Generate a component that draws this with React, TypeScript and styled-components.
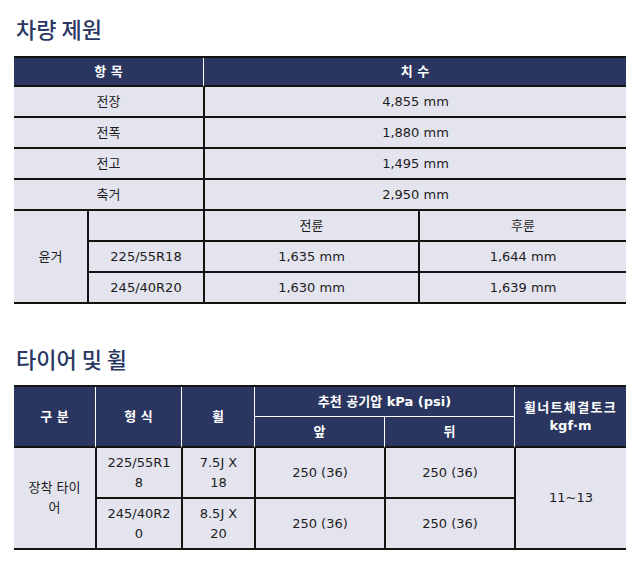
import React from "react";
import styled, { createGlobalStyle } from "styled-components";

const Global = createGlobalStyle`
  html, body { margin: 0; padding: 0; background: #ffffff; }
  body { font-family: "DejaVu Sans", "Noto Sans CJK KR", sans-serif; color: #1c1c1c; }
`;

const NAVY = "#2a3660";
const BODY_BG = "#e4e4ef";
const LINE = "#15130f";

const Page = styled.div`
  padding: 13px 14px 0 14px;
  display: flex;
  flex-direction: column;
`;

const Title = styled.h2<{ $top?: number; $bottom?: number }>`
  margin: ${(p) => p.$top ?? 0}px 0 ${(p) => p.$bottom ?? 13}px 2px;
  font-family: "Noto Sans CJK KR", sans-serif;
  font-size: 22px;
  line-height: 30px;
  font-weight: 500;
  color: #2b3763;
`;

const Table = styled.table`
  width: 612px;
  table-layout: fixed;
  border-collapse: separate;
  border-spacing: 0;
  border-top: 2px solid ${LINE};
`;

const Head = styled.th<{
  $first?: boolean;
  $h: number;
  $bottom?: "dark" | "white";
}>`
  box-sizing: border-box;
  background: ${NAVY};
  color: #ffffff;
  font-family: "DejaVu Sans", "Noto Sans CJK KR", sans-serif;
  font-size: 13px;
  font-weight: 700;
  line-height: 18px;
  height: ${(p) => p.$h}px;
  padding: 0 4px;
  text-align: center;
  vertical-align: middle;
  border-left: ${(p) => (p.$first ? "none" : "1px solid #ffffff")};
  border-bottom: ${(p) =>
    p.$bottom === "white" ? "1px solid #ffffff" : `2px solid ${LINE}`};
`;

const Spread = styled.span`
  letter-spacing: 1.3px;
`;

const Cell = styled.td<{ $first?: boolean; $h: number; $wrap?: boolean }>`
  box-sizing: border-box;
  background: ${BODY_BG};
  font-size: 13px;
  line-height: 20px;
  height: ${(p) => p.$h}px;
  padding: 0 10px;
  text-align: center;
  vertical-align: middle;
  border-left: ${(p) => (p.$first ? "none" : `2px solid ${LINE}`)};
  border-bottom: 2px solid ${LINE};
  overflow-wrap: ${(p) => (p.$wrap ? "anywhere" : "normal")};
`;

const specs = [
  ["전장", "4,855 mm"],
  ["전폭", "1,880 mm"],
  ["전고", "1,495 mm"],
  ["축거", "2,950 mm"],
];

const tread = [
  ["225/55R18", "1,635 mm", "1,644 mm"],
  ["245/40R20", "1,630 mm", "1,639 mm"],
];

const tires = [
  ["225/55R18", "7.5J X 18"],
  ["245/40R20", "8.5J X 20"],
];

export default function App() {
  return (
    <>
      <Global />
      <Page>
        <Title>차량 제원</Title>
        <Table>
          <colgroup>
            <col style={{ width: 73 }} />
            <col style={{ width: 116 }} />
            <col style={{ width: 215 }} />
            <col style={{ width: 208 }} />
          </colgroup>
          <thead>
            <tr>
              <Head $first $h={29} colSpan={2}>항 목</Head>
              <Head $h={29} colSpan={2}>치 수</Head>
            </tr>
          </thead>
          <tbody>
            {specs.map(([k, v]) => (
              <tr key={k}>
                <Cell $first $h={31} colSpan={2}>{k}</Cell>
                <Cell $h={31} colSpan={2}>{v}</Cell>
              </tr>
            ))}
            <tr>
              <Cell $first $h={31} rowSpan={3}>윤거</Cell>
              <Cell $h={31}></Cell>
              <Cell $h={31}>전륜</Cell>
              <Cell $h={31}>후륜</Cell>
            </tr>
            {tread.map(([a, b, c]) => (
              <tr key={a}>
                <Cell $h={31}>{a}</Cell>
                <Cell $h={31}>{b}</Cell>
                <Cell $h={31}>{c}</Cell>
              </tr>
            ))}
          </tbody>
        </Table>
        <Title $top={39} $bottom={12}>타이어 및 휠</Title>
        <Table>
          <colgroup>
            <col style={{ width: 81 }} />
            <col style={{ width: 86 }} />
            <col style={{ width: 73 }} />
            <col style={{ width: 130 }} />
            <col style={{ width: 130 }} />
            <col style={{ width: 112 }} />
          </colgroup>
          <thead>
            <tr>
              <Head $first $h={61} rowSpan={2}>구 분</Head>
              <Head $h={61} rowSpan={2}>형 식</Head>
              <Head $h={61} rowSpan={2}>휠</Head>
              <Head $h={30} colSpan={2} $bottom="white">추천 공기압 kPa (psi)</Head>
              <Head $h={61} rowSpan={2}>
                <Spread>휠너트체결토크</Spread>
                <br />
                kgf·m
              </Head>
            </tr>
            <tr>
              <Head $h={31}>앞</Head>
              <Head $h={31}>뒤</Head>
            </tr>
          </thead>
          <tbody>
            {tires.map(([size, wheel], i) => (
              <tr key={size}>
                {i === 0 && (
                  <Cell $first $h={51} rowSpan={2} $wrap>장착 타이어</Cell>
                )}
                <Cell $h={51} $wrap>{size}</Cell>
                <Cell $h={51} $wrap>{wheel}</Cell>
                <Cell $h={51}>250 (36)</Cell>
                <Cell $h={51}>250 (36)</Cell>
                {i === 0 && (
                  <Cell $h={51} rowSpan={2}>11~13</Cell>
                )}
              </tr>
            ))}
          </tbody>
        </Table>
      </Page>
    </>
  );
}
